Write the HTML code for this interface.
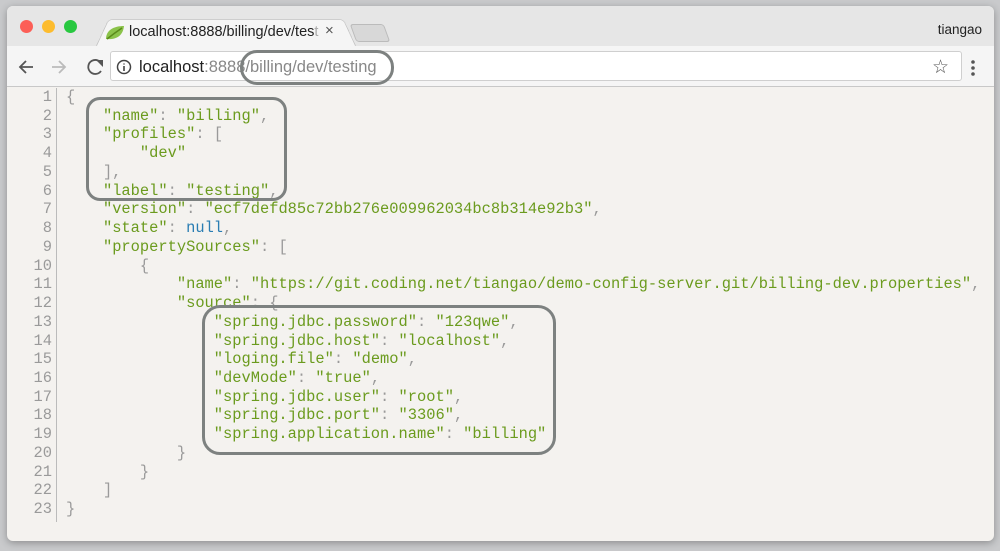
<!DOCTYPE html>
<html><head><meta charset="utf-8"><style>
*{margin:0;padding:0;box-sizing:border-box}
body{width:1000px;height:551px;background:#c9cacc;position:relative;overflow:hidden;font-family:"Liberation Sans",sans-serif}
.win{position:absolute;left:7px;top:6px;width:987px;height:535px;background:#f4f2ef;border-radius:6px;overflow:hidden;box-shadow:0 2px 8px rgba(0,0,0,.3)}
.tabbar{position:absolute;left:0;top:0;width:100%;height:40px;background:#e6e6e6}
.toolbar{position:absolute;left:0;top:40px;width:100%;height:41px;background:#f5f5f5;border-bottom:1px solid #c8c8c8}
.dot{position:absolute;top:14px;width:13px;height:13px;border-radius:50%}
.tab{position:absolute;left:88px;top:9px;width:262px;height:33px;background:#f5f5f5;border:1px solid #c9c9c9;border-bottom:none;border-radius:5px 5px 0 0;transform:perspective(60px) rotateX(12deg);transform-origin:bottom}
.tabtxt{position:absolute;left:122px;top:18px;font-size:14.5px;color:#222}
.omni{position:absolute;left:103px;top:45px;width:852px;height:30px;background:#fff;border:1px solid #cfcfcf;border-radius:3px}
.url{position:absolute;left:132px;top:52px;font-size:16.5px;color:#222}
.code{position:absolute;left:0;top:82px;font-family:"Liberation Mono",monospace;font-size:15.4px;line-height:18.73px;white-space:pre}
.ln{position:absolute;left:0;width:45px;text-align:right;color:#9a9a9a}
.tx{position:absolute;left:59px;color:#9a9a9a}
.s{color:#6b9b1e}.n{color:#2a7db3}
.gut{position:absolute;left:49px;top:82px;width:1px;height:434px;background:#bbb}
.ann{position:absolute;border:3px solid #7d8180;border-radius:14px}
</style></head><body>
<div class="win">
<div class="tabbar"></div>
<div class="dot" style="left:13px;background:#fc5f57"></div>
<div class="dot" style="left:35px;background:#fdbc2e"></div>
<div class="dot" style="left:57px;background:#28c840"></div>
<div class="tab"></div>
<div style="position:absolute;left:346px;top:18px;width:34px;height:18px;background:#d8d8d8;border:1px solid #bbb;border-radius:3px;transform:skewX(20deg)"></div>
<svg style="position:absolute;left:97px;top:18px" width="22" height="18"><path d="M2 15 C2 6 10 2 20 2 C19 12 12 16 2 15Z" fill="#8bc34a"/><path d="M3 15 C8 11 12 8 18 4" stroke="#5a8a1a" stroke-width="1.5" fill="none"/></svg>
<div class="tabtxt">localhost:8888/billing/dev/tes<span style="color:#aaa">t</span></div>
<div style="position:absolute;left:318px;top:16px;font-size:15px;color:#555">×</div>
<div style="position:absolute;right:12px;top:16px;font-size:13.5px;color:#222">tiangao</div>
<div class="toolbar"></div>
<svg style="position:absolute;left:10px;top:51px" width="90" height="20"><path d="M16 10H3M9 4L3 10L9 16" stroke="#555" stroke-width="1.8" fill="none"/><path d="M35 10H48M42 4L48 10L42 16" stroke="#bbb" stroke-width="1.8" fill="none"/><path d="M85 8A7 7 0 1 0 84 14" stroke="#555" stroke-width="1.8" fill="none"/><path d="M79 3L86 3L86 10Z" fill="#555"/></svg>
<div class="omni"></div>
<svg style="position:absolute;left:109px;top:53px" width="16" height="16"><circle cx="8" cy="8" r="6.5" stroke="#444" stroke-width="1.5" fill="none"/><path d="M8 7V12M8 4.5V5.5" stroke="#444" stroke-width="1.6"/></svg>
<div class="url">localhost<span style="color:#888">:8888/billing/dev/testing</span></div>
<div style="position:absolute;left:925px;top:50px;font-size:19px;color:#555">☆</div>
<svg style="position:absolute;left:963px;top:53px" width="6" height="18"><circle cx="3" cy="3" r="1.8" fill="#555"/><circle cx="3" cy="9" r="1.8" fill="#555"/><circle cx="3" cy="15" r="1.8" fill="#555"/></svg>
<div class="gut"></div>
<div class="code" style="left:0">
<div class="ln" style="top:0">1
2
3
4
5
6
7
8
9
10
11
12
13
14
15
16
17
18
19
20
21
22
23</div>
<div class="tx" style="top:0">{
    <span class="s">"name"</span>: <span class="s">"billing"</span>,
    <span class="s">"profiles"</span>: [
        <span class="s">"dev"</span>
    ],
    <span class="s">"label"</span>: <span class="s">"testing"</span>,
    <span class="s">"version"</span>: <span class="s">"ecf7defd85c72bb276e009962034bc8b314e92b3"</span>,
    <span class="s">"state"</span>: <span class="n">null</span>,
    <span class="s">"propertySources"</span>: [
        {
            <span class="s">"name"</span>: <span class="s">"https://git.coding.net/tiangao/demo-config-server.git/billing-dev.properties"</span>,
            <span class="s">"source"</span>: {
                <span class="s">"spring.jdbc.password"</span>: <span class="s">"123qwe"</span>,
                <span class="s">"spring.jdbc.host"</span>: <span class="s">"localhost"</span>,
                <span class="s">"loging.file"</span>: <span class="s">"demo"</span>,
                <span class="s">"devMode"</span>: <span class="s">"true"</span>,
                <span class="s">"spring.jdbc.user"</span>: <span class="s">"root"</span>,
                <span class="s">"spring.jdbc.port"</span>: <span class="s">"3306"</span>,
                <span class="s">"spring.application.name"</span>: <span class="s">"billing"</span>
            }
        }
    ]
}</div>
</div>
</div>
<div class="ann" style="left:240px;top:50px;width:154px;height:35px;border-radius:17px"></div>
<div class="ann" style="left:86px;top:97px;width:201px;height:104px"></div>
<div class="ann" style="left:202px;top:305px;width:354px;height:150px;border-radius:18px"></div>
</body></html>
